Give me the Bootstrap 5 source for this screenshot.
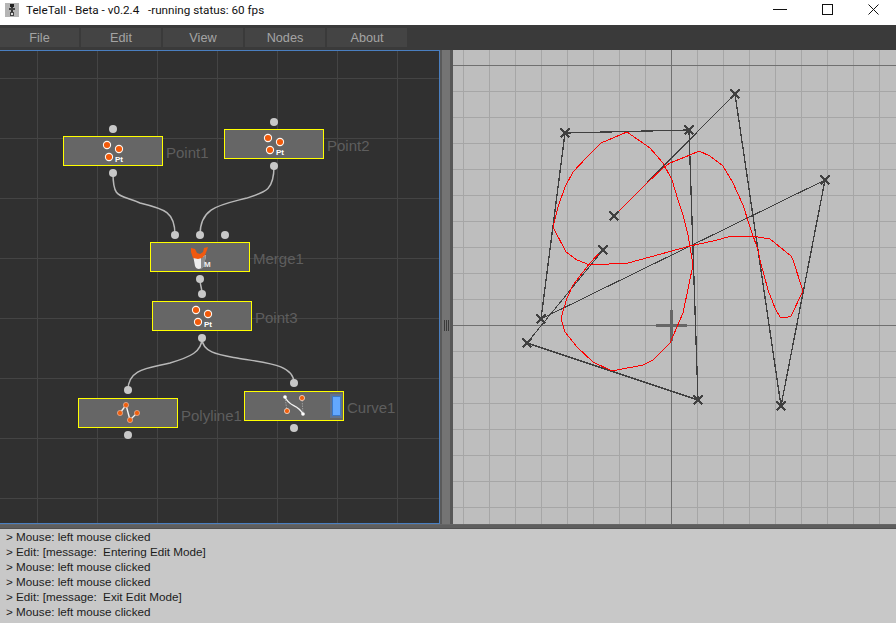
<!DOCTYPE html>
<html lang="en">
<head>
<meta charset="utf-8">
<title>TeleTall</title>
<link href="https://cdn.jsdelivr.net/npm/bootstrap@5.3.0/dist/css/bootstrap.min.css" rel="stylesheet">
<style>
html,body{height:100%;margin:0;overflow:hidden}
body{width:896px;height:623px;background:#fff;font-family:"Liberation Sans",Arial,sans-serif}
.tt-title{height:25px;flex:none;background:#fff;font-family:Roboto,"Noto Sans",sans-serif;font-size:11.7px;line-height:20px;color:#111}
.tt-title span{white-space:pre}
.tt-appicon{width:14px;height:14px;margin:3px 7px 0 5px;flex:none}
.tt-menu{height:25px;flex:none;background:#3a3a3a;padding-top:3px;gap:2px}
.tt-menu .btn{width:80px;height:19px;padding:0;border:0;border-radius:0;background:#444;color:#a4a4a4;font-size:12.7px;line-height:18px}
.tt-menu .btn:first-child{width:79px}
.tt-main{height:474px;flex:none}
.tt-editor{width:440px;height:474px;position:relative;background:#303030;border:solid #4a7fc0;border-width:1px 1px 1px 0;box-sizing:border-box;flex:none;overflow:hidden}
.tt-editor>svg{position:absolute;left:0;top:-1px}
.tt-split{width:13px;flex:none;background:#747474;border-left:2px solid #5a5a5a;border-right:3px solid #585858}
.tt-view{width:443px;flex:none;background:#bebebe}
.tt-view svg{display:block;shape-rendering:crispEdges}
.tt-node{position:absolute;width:100px;height:30px;background:#666;border:1px solid #ff0;box-sizing:border-box}
.tt-node svg{display:block}
.tt-label{position:absolute;font-size:15px;line-height:18px;color:#5e5e5e;white-space:nowrap}
.tt-hsplit{height:5px;flex:none;background:#5e5e5e;border-top:1px solid #666;border-bottom:1px solid #505050}
.tt-log{height:94px;flex:none;background:#c8c8c8;padding:0 0 0 6px;font-size:11.7px;line-height:15px;color:#1c1c1c}
.tt-log div{height:15px;white-space:pre}
.tt-grip{width:5px;height:11px;margin:270px 0 0 2px;border-left:1px solid #3a3a3a;border-right:1px solid #3a3a3a;position:relative}
.tt-grip::after{content:"";position:absolute;left:1px;top:0;width:1px;height:11px;background:#3a3a3a}
</style>
</head>
<body class="d-flex flex-column">
<header class="tt-title d-flex align-items-start">
  <svg class="tt-appicon" viewBox="0 0 14 14"><rect width="14" height="14" fill="#b5b5b5"/><rect x="5" y="1" width="4" height="3" fill="#222"/><rect x="6" y="4" width="2" height="5" fill="#333"/><path d="M4 5h6v2H4zM5 9h4v4H5z" fill="#444"/><rect x="6" y="10" width="2" height="2" fill="#ddd"/></svg>
  <span>TeleTall - Beta - v0.2.4   -running status: 60 fps</span>
  <svg class="ms-auto" width="124" height="25" viewBox="772 0 124 25"><path d="M773 9.500h14" stroke="#111" fill="none"/><rect x="822.500" y="4.500" width="10" height="10" fill="none" stroke="#111"/><path d="M868.500 4.500l10 10M878.500 4.500l-10 10" stroke="#111" fill="none"/></svg>
</header>
<nav class="tt-menu d-flex">
  <button class="btn" type="button">File</button>
  <button class="btn" type="button">Edit</button>
  <button class="btn" type="button">View</button>
  <button class="btn" type="button">Nodes</button>
  <button class="btn" type="button">About</button>
</nav>
<main class="tt-main d-flex">
  <section class="tt-editor">
    <svg width="440" height="474" viewBox="0 50 440 474">
      <g stroke="#444" stroke-width="1" fill="none">
        <path d="M37.500 50V524M97.500 50V524M157.500 50V524M217.500 50V524M277.500 50V524M337.500 50V524M397.500 50V524"/>
        <path d="M0 78.500H440M0 138.500H440M0 198.500H440M0 258.500H440M0 318.500H440M0 378.500H440M0 438.500H440M0 498.500H440"/>
      </g>
      <g stroke="#b8b8b8" stroke-width="1.500" fill="none">
        <path d="M113 173C113 200 120 194 140 203C165 209 175 212 175 235"/>
        <path d="M274 166C274 190 266 192 247 198C220 205 200 207 200 235"/>
        <path d="M200 279C200 286 202 287 202 294"/>
        <path d="M202 338C202 352 190 357 170 363C150 368 128 368 128 390"/>
        <path d="M202 338C202 353 220 355 237 358C265 363 294 364 294 383"/>
      </g>
      <g fill="#c8c8c8">
        <circle cx="113" cy="129" r="4"/><circle cx="113" cy="173" r="4"/>
        <circle cx="274" cy="122" r="4"/><circle cx="274" cy="166" r="4"/>
        <circle cx="175" cy="235" r="4"/><circle cx="200" cy="235" r="4"/><circle cx="225" cy="235" r="4"/><circle cx="200" cy="279" r="4"/>
        <circle cx="202" cy="294" r="4"/><circle cx="202" cy="338" r="4"/>
        <circle cx="128" cy="390" r="4"/><circle cx="128" cy="435" r="4"/>
        <circle cx="294" cy="383" r="4"/><circle cx="294" cy="428" r="4"/>
      </g>
    </svg>

    <div class="tt-node" style="left:63px;top:85px"><svg width="98" height="28" viewBox="1 1 98 28"><use href="#pt"/></svg></div>
    <div class="tt-label" style="left:166px;top:93px">Point1</div>

    <div class="tt-node" style="left:224px;top:78px"><svg width="98" height="28" viewBox="1 1 98 28"><use href="#pt"/></svg></div>
    <div class="tt-label" style="left:327px;top:86px">Point2</div>

    <div class="tt-node" style="left:150px;top:191px">
      <svg width="98" height="28" viewBox="1 1 98 28">
        <path d="M43 13q6 3 13 0l-2 11q-2 3-5 3t-4-3z" fill="#ededed"/>
        <path d="M51 15q3 0 5-2l-2 11q-1 2-3 3z" fill="#8a8a8a"/>
        <path d="M41 6l4 1 2 4 3 1 3-2 1-4 4-1-1 3-2 5-3 3-4 1-5-1-2-6z" fill="#f0590f"/>
        <text x="54" y="25" font-size="8" font-weight="700" fill="#eee">M</text>
      </svg>
    </div>
    <div class="tt-label" style="left:253px;top:199px">Merge1</div>

    <div class="tt-node" style="left:152px;top:250px"><svg width="98" height="28" viewBox="1 1 98 28"><use href="#pt"/></svg></div>
    <div class="tt-label" style="left:255px;top:258px">Point3</div>

    <div class="tt-node" style="left:78px;top:347px">
      <svg width="98" height="28" viewBox="1 1 98 28">
        <path d="M42 15L48 7 52 22 59 15" stroke="#f2f2f2" stroke-width="1.400" fill="none"/>
        <g fill="#f0600f" stroke="#e8b8a0" stroke-width=".7"><circle cx="42" cy="15" r="2.600"/><circle cx="48" cy="7" r="2.600"/><circle cx="52" cy="22" r="2.600"/><circle cx="59" cy="15" r="2.600"/></g>
      </svg>
    </div>
    <div class="tt-label" style="left:181px;top:356px">Polyline1</div>

    <div class="tt-node" style="left:244px;top:340px">
      <svg width="98" height="28" viewBox="1 1 98 28">
        <path d="M41 6L43 20M58 7L59 23" stroke="#aaa" stroke-width=".8" stroke-dasharray="1.500 1" fill="none"/>
        <path d="M41 6C46 17 53 12 59 23" stroke="#f2f2f2" stroke-width="1.300" fill="none"/>
        <circle cx="41" cy="6" r="1.800" fill="#fff"/><circle cx="59" cy="23" r="1.800" fill="#fff"/>
        <g fill="#f0600f" stroke="#f4ddd0" stroke-width=".8"><circle cx="58" cy="7" r="2.600"/><circle cx="43" cy="20" r="2.600"/></g>
        <rect x="86" y="3" width="12" height="24" fill="#5a8cd8" opacity=".35"/>
        <rect x="88.500" y="5.500" width="8" height="19" fill="#62a8ff" stroke="#3a78c8"/>
      </svg>
    </div>
    <div class="tt-label" style="left:347px;top:348px">Curve1</div>

    <svg width="0" height="0"><defs><g id="pt">
      <g fill="#f25a0a" stroke="#fbf6f0" stroke-width="1.100"><circle cx="44" cy="9" r="3.600"/><circle cx="56" cy="13" r="3.600"/><circle cx="46" cy="21" r="3.600"/></g>
      <text x="52" y="26" font-size="8" font-weight="700" fill="#fff" font-family="Liberation Sans">Pt</text>
    </g></defs></svg>
  </section>
  <div class="tt-split"><div class="tt-grip"></div></div>
  <section class="tt-view">
    <svg width="443" height="474" viewBox="453 50 443 474">
      <g stroke="#a6a6a6" stroke-width="1" fill="none">
        <path d="M463.500 50V524M489.500 50V524M515.500 50V524M541.500 50V524M567.500 50V524M593.500 50V524M619.500 50V524M645.500 50V524M697.500 50V524M723.500 50V524M749.500 50V524M775.500 50V524M801.500 50V524M827.500 50V524M853.500 50V524M879.500 50V524"/>
        <path d="M453 91.500H896M453 117.500H896M453 143.500H896M453 169.500H896M453 195.500H896M453 221.500H896M453 247.500H896M453 273.500H896M453 299.500H896M453 351.500H896M453 377.500H896M453 403.500H896M453 429.500H896M453 455.500H896M453 481.500H896M453 507.500H896"/>
      </g>
      <path d="M671.500 50V524M453 325.500H896M453 65.500H896" stroke="#707070" fill="none"/>
      <path d="M656 325.500H687M671.500 310V341" stroke="#666" stroke-width="3" fill="none"/>
      <g stroke="#404040" fill="none">
        <path stroke-width="1.300" d="M541 319L565 133L689 130L698 400L527 343"/>
        <path stroke-width="1.300" d="M735 94L781 406L825 180"/>
        <g stroke-width="1">
          <path d="M614 216L735 94"/>
          <path d="M541 319L825 180"/>
          <path d="M603 250L527 343"/>
        </g>
      </g>
      <path fill="none" stroke="#f00" stroke-width="1" d="M613 217L647 183L663 168L670 163L690 155L699 151L710 156L723 166L733 183L743 205L750 227L758 250L760 260L768 290L775 308L780 317L785 318L791 316L803 291L793 260L791 256L770 239L752 236L732 236L713 241L690 246L650 257L628 263L590 265L577 260L566 252L553 227L558 207L565 187L573 172L587 157L601 143L627 132L650 148L663 163L672 180L678 200L683 215L688 235L693 265L683 313L670 343L653 360L643 365L612 371L593 362L577 347L565 332L561 318L567 298L573 285L590 263L603 249"/>
      <g stroke="#404040" stroke-width="2.600" fill="none">
        <path d="M560.500 128.500l9 9m0-9l-9 9"/>
        <path d="M684.500 125.500l9 9m0-9l-9 9"/>
        <path d="M730.500 89.500l9 9m0-9l-9 9"/>
        <path d="M820.500 175.500l9 9m0-9l-9 9"/>
        <path d="M609.500 211.500l9 9m0-9l-9 9"/>
        <path d="M598.500 245.500l9 9m0-9l-9 9"/>
        <path d="M536.500 314.500l9 9m0-9l-9 9"/>
        <path d="M522.500 338.500l9 9m0-9l-9 9"/>
        <path d="M693.500 395.500l9 9m0-9l-9 9"/>
        <path d="M776.500 401.500l9 9m0-9l-9 9"/>
      </g>
    </svg>
  </section>
</main>
<div class="tt-hsplit"></div>
<section class="tt-log">
<div>&gt; Mouse: left mouse clicked</div>
<div>&gt; Edit: [message:  Entering Edit Mode]</div>
<div>&gt; Mouse: left mouse clicked</div>
<div>&gt; Mouse: left mouse clicked</div>
<div>&gt; Edit: [message:  Exit Edit Mode]</div>
<div>&gt; Mouse: left mouse clicked</div>
</section>
<script src="https://cdn.jsdelivr.net/npm/bootstrap@5.3.0/dist/js/bootstrap.bundle.min.js"></script>
</body>
</html>
